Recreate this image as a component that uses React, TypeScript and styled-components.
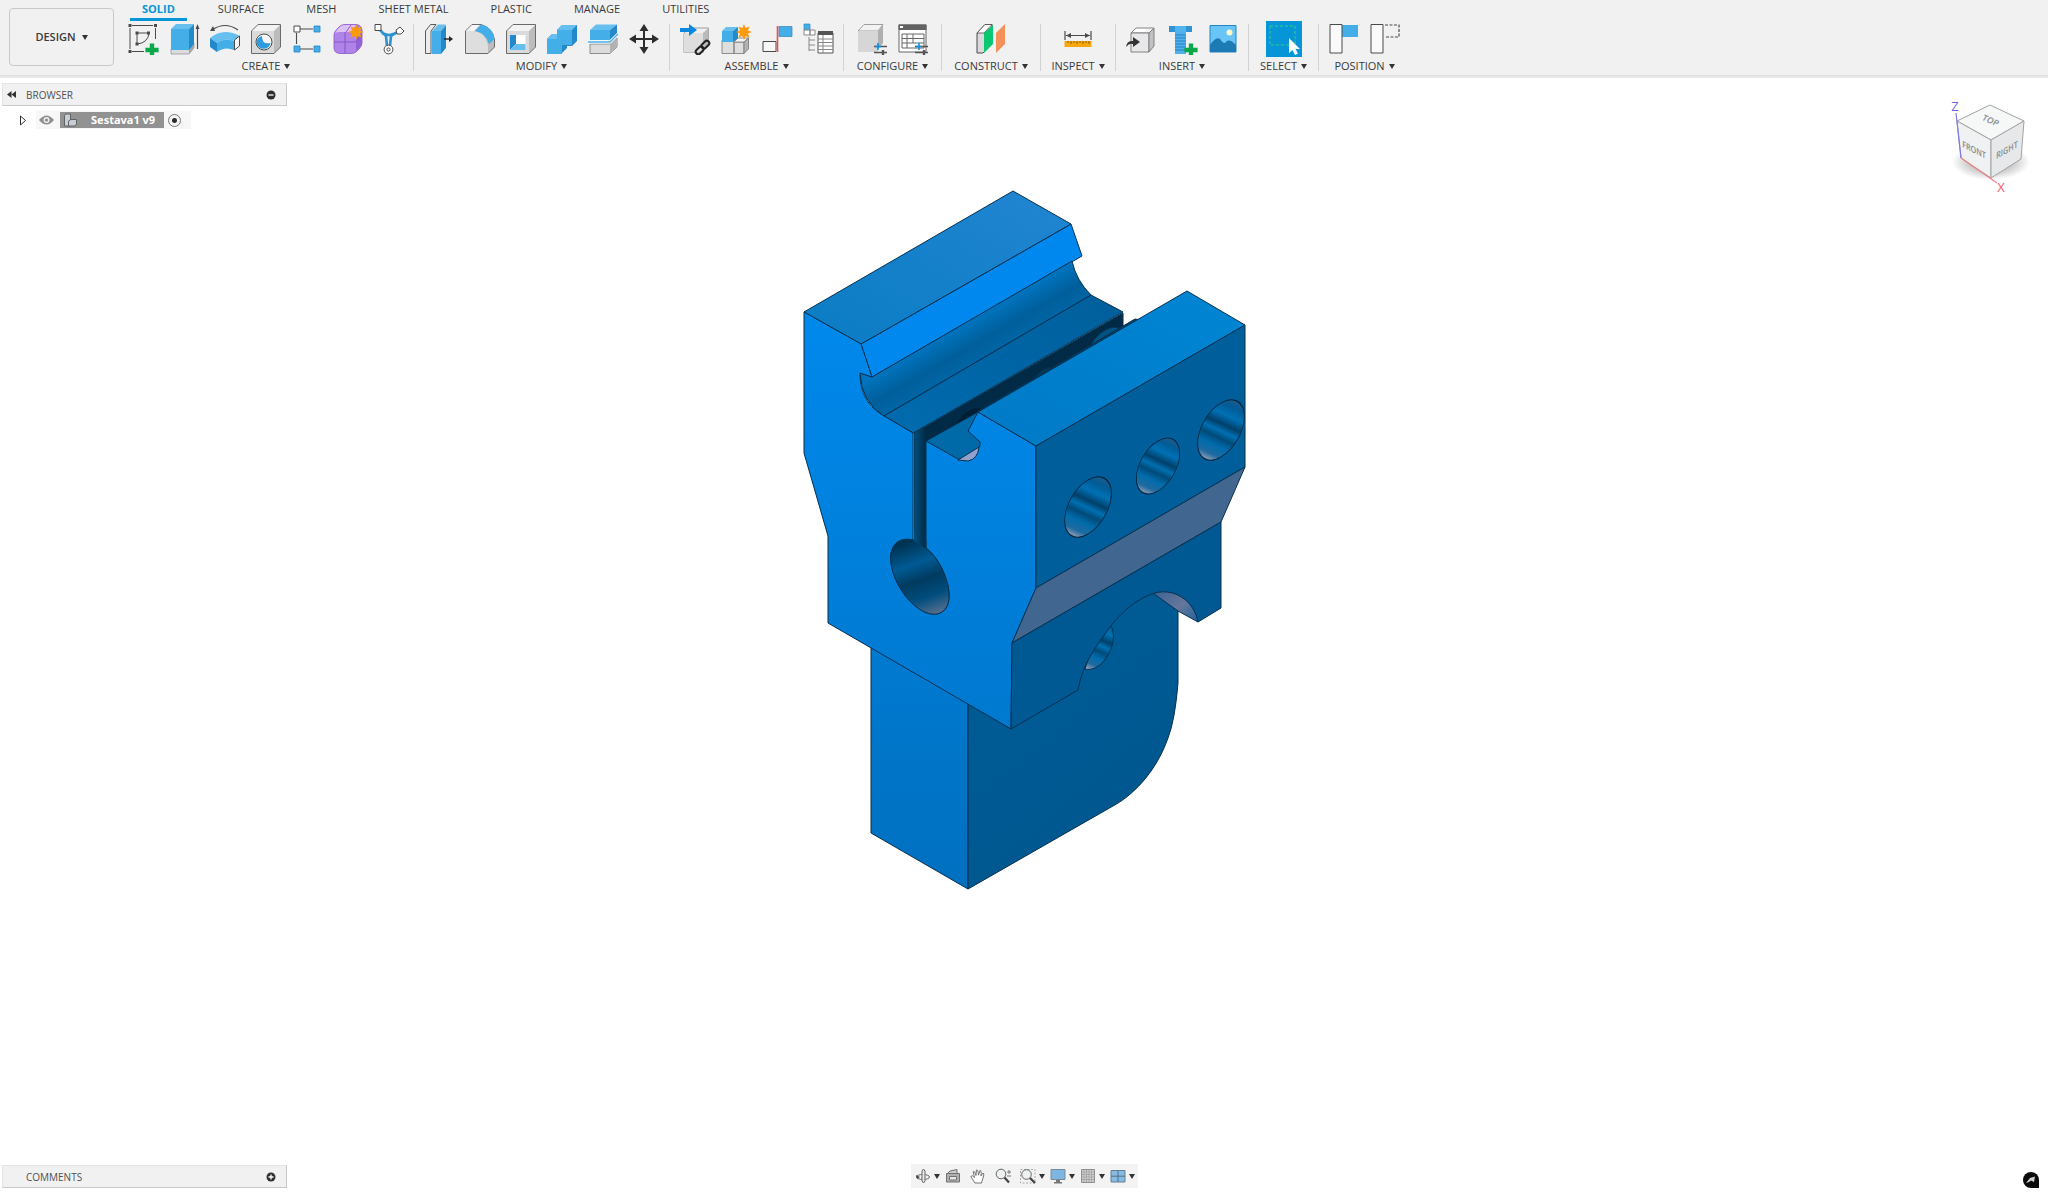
import React from 'react';
import styled, { createGlobalStyle } from 'styled-components';

const color = {
  bar: '#f1f1f1',
  text: '#3a3a3a',
  accent: '#0696d7',
  blue: '#44aee8',
  blueDark: '#2389c8',
  blueLight: '#66bfee',
  ink: '#4a4a4a',
};

const GlobalStyle = createGlobalStyle`
  * { box-sizing: border-box; }
  body { margin: 0; background: #fff; }
  button { font: inherit; color: inherit; background: none; border: 0; padding: 0; margin: 0; cursor: pointer; }
  svg { display: block; }
`;

const Page = styled.div`
  min-height: 100vh;
  display: flex;
  flex-direction: column;
  font-family: 'Open Sans', 'Noto Sans', sans-serif;
  font-size: 11px;
  line-height: 16px;
  color: ${color.text};
`;

/* ---------- toolbar ---------- */

const Header = styled.header`
  display: flex;
  align-items: flex-start;
  gap: 9px;
  height: 78px;
  padding-left: 9px;
  background: ${color.bar};
  border-bottom: 2px solid #e9e9e9;
  box-shadow: inset 0 -1px 0 #dedede;
`;

const WorkspaceButton = styled.button`
  display: flex;
  align-items: center;
  justify-content: center;
  gap: 6px;
  width: 105px;
  height: 58px;
  margin-top: 8px;
  border: 1px solid #c9c9c9;
  border-radius: 4px;
  font-weight: 600;
`;

const Ribbon = styled.div`
  flex: 1;
`;

const Tabs = styled.nav`
  display: flex;
  gap: 20px;
  padding-left: 7px;
`;

const Tab = styled.button<{ $active?: boolean }>`
  height: 21px;
  padding: 0 ${(p) => (p.$active ? 12 : 11)}px;
  line-height: 18px;
  border-bottom: 3px solid ${(p) => (p.$active ? color.accent : 'transparent')};
  color: ${(p) => (p.$active ? color.accent : color.text)};
  font-weight: ${(p) => (p.$active ? 700 : 400)};
`;

const Groups = styled.div`
  display: flex;
`;

const Group = styled.section<{ $width: number }>`
  display: flex;
  flex-direction: column;
  align-items: center;
  gap: 1px;
  flex: none;
  width: ${(p) => p.$width}px;

  &:first-child {
    padding-right: 4px;
  }
`;

const Divider = styled.span`
  width: 1px;
  height: 47px;
  margin-top: 3px;
  background: #d2d2d2;
`;

const Tools = styled.div`
  display: flex;
  gap: 5px;
`;

const Tool = styled.button<{ $active?: boolean }>`
  display: grid;
  place-items: center;
  width: 36px;
  height: 36px;
  background: ${(p) => (p.$active ? color.accent : 'transparent')};
`;

const GroupLabel = styled.button`
  display: flex;
  align-items: center;
  gap: 4px;
  white-space: nowrap;
`;

const Caret = () => (
  <svg width="6" height="5" viewBox="0 0 6 5" aria-hidden>
    <path d="M0 0H6L3 5Z" fill="#333" />
  </svg>
);

/* ---------- tool icons, 32 x 32 grid ---------- */

const Cube = () => (
  <g>
    <path d="M1.500 8L8 1.500H30.500L24 8Z" fill="#f3f3f3" />
    <path d="M24 8L30.500 1.500V24L24 30.500Z" fill="#bcbcbc" />
    <path d="M1.500 8H24V30.500H1.500Z" fill="#dadada" />
    <path d="M1.500 8L8 1.500H30.500V24L24 30.500H1.500Z" fill="none" stroke="#6a6a6a" strokeLinejoin="round" />
  </g>
);

const Spark = ({ x, y }: { x: number; y: number }) => (
  <g transform={`translate(${x} ${y})`}>
    <path
      d="M0 -8L1.600 -3.900L5.600 -5.600L3.900 -1.600L8 0L3.900 1.600L5.600 5.600L1.600 3.900L0 8L-1.600 3.900L-5.600 5.600L-3.900 1.600L-8 0L-3.900 -1.600L-5.600 -5.600L-1.600 -3.900Z"
      fill="#fb9a0a"
    />
  </g>
);

const Plus = ({ x, y }: { x: number; y: number }) => (
  <path
    d={`M${x - 2.2} ${y - 6.6}h4.4v4.4h4.4v4.4h-4.4v4.4h-4.4v-4.4h-4.4v-4.4h4.4Z`}
    fill="#0ba84a"
  />
);

const Sliders = ({ x, y }: { x: number; y: number }) => (
  <g transform={`translate(${x} ${y})`}>
    <path d="M0 3.500H13M0 9.500H13" stroke="#555" strokeWidth="1.600" />
    <path d="M4 0V7M1 3.500H7" stroke="#0c8fe0" strokeWidth="1.600" />
    <path d="M9 7V12.500" stroke="#555" strokeWidth="2.400" />
  </g>
);

const icons: Record<string, React.ReactNode> = {
  sketch: (
    <g fill="none" stroke={color.ink}>
      <path d="M5 2.500H26M3 5V26M5 28.500H17M28.500 5V16" strokeWidth="1" />
      <path d="M10 10V21M10 10H22Q21 20 10 21" strokeWidth="1" />
      <path d="M1.500 1h3v3h-3zM27 1h3v3h-3zM1.500 27h3v3h-3zM8.500 8.500h3v3h-3zM20 8.500h3v3h-3zM8.500 19.500h3v3h-3z" fill={color.ink} stroke="none" />
      <g stroke="none"><Plus x={25} y={27} /></g>
    </g>
  ),
  extrude: (
    <g>
      <path d="M3 26H21L26 20V25L21 31H3Z" fill="#dcdcdc" stroke="#8d8d8d" strokeWidth=".7" />
      <path d="M21 27V31L26 25V20Z" fill="#a5a5a5" />
      <path d="M3 6L8 1H26L21 6Z" fill={color.blueLight} />
      <path d="M3 6H21V27H3Z" fill={color.blue} />
      <path d="M21 6L26 1V21L21 27Z" fill={color.blueDark} />
      <path d="M29.500 5V26" stroke={color.ink} strokeWidth="1.200" />
      <path d="M29.500 1L31.500 6H27.500Z" fill={color.ink} />
    </g>
  ),
  revolve: (
    <g>
      <path d="M3 7Q16 -2 29 7" fill="none" stroke={color.ink} strokeWidth="1.200" />
      <path d="M1 8L4 3L6 8Z" fill={color.ink} />
      <path d="M1 15Q14 4 31 13L25 18Q16 14 8 20Z" fill={color.blueLight} />
      <path d="M1 15L8 20V29L1 24Z" fill={color.blueDark} />
      <path d="M8 20Q16 14 25 18V27Q16 23 8 29Z" fill={color.blue} />
      <path d="M25.500 17L30.500 13V23L25.500 27Z" fill="#f8f8f8" stroke={color.ink} />
    </g>
  ),
  hole: (
    <g>
      <Cube />
      <circle cx="14" cy="19" r="8" fill="#f7f7f7" stroke={color.ink} />
      <path d="M12 13A7 6.500 0 1 0 20.500 20Q12 22 12 13Z" fill="#2d9bdd" />
    </g>
  ),
  pattern: (
    <g>
      <path d="M9 6H22M5.500 10V21M9 26H22" stroke={color.ink} strokeWidth="1.100" />
      <path d="M3 3h6v6H3z" fill="#fff" stroke={color.ink} />
      <path d="M23 3h6v6h-6zM3 23h6v6H3zM23 23h6v6h-6z" fill={color.blue} stroke="#2387c4" strokeWidth=".8" />
    </g>
  ),
  form: (
    <g>
      <path d="M2 12Q2 9 5 6L8 3Q10 1.500 13 1.500H24Q30 2 30 8V20Q30 23 27 26L24 29Q22 30.500 19 30.500H8Q2 30 2 25Z" fill="#b083e8" stroke="#8a58cc" strokeWidth=".8" />
      <path d="M3 10Q5 6 9 3Q11 2 14 2H24L19 9H8Q5 9 3 10Z" fill="#dcc0f8" />
      <path d="M24 12L30 7V20Q29 24 24 28Z" fill="#9460d6" />
      <path d="M2 19H23L30 13M13 9V30M14 9L19 2" fill="none" stroke="#8450c4" strokeWidth=".9" />
      <Spark x={24} y={9} />
    </g>
  ),
  pipe: (
    <g>
      <path d="M6 6L13 13L14 23M26 8L18 13L17 23M9 10Q16 14 23 10" fill="none" stroke="#2f92d2" strokeWidth="2.600" />
      <path d="M2 1.500h6v6H2z" fill="#fff" stroke={color.ink} />
      <path d="M23 7L27 4L31 8L28 11H24Z" fill="#fff" stroke={color.ink} />
      <circle cx="15.500" cy="26.500" r="4.400" fill="#fff" stroke={color.ink} />
      <circle cx="15.500" cy="26.500" r="1.600" fill="none" stroke={color.ink} />
    </g>
  ),
  pressPull: (
    <g>
      <path d="M2.500 8L7.500 1.500H13L8 8V30.500H2.500Z" fill="#ececec" stroke={color.ink} strokeWidth=".9" />
      <path d="M9 8L15 1.500H23L18 8Z" fill={color.blueLight} />
      <path d="M9 8H18V31H9Z" fill={color.blue} />
      <path d="M18 8L23 2V25L18 31Z" fill={color.blueDark} />
      <path d="M21 16H27" stroke="#222" strokeWidth="1.400" />
      <path d="M26 13L30 16L26 19Z" fill="#222" />
    </g>
  ),
  fillet: (
    <g>
      <path d="M1.500 8L8 1.500H17Q29 5 30.500 17V24L24 30.500H1.500Z" fill="#bdbdbd" stroke="#6a6a6a" />
      <path d="M2 8L8 2H16L10 8Z" fill="#f6f6f6" />
      <path d="M2 8H10Q22 10 24 23V30H2Z" fill="#dedede" />
      <path d="M11 8L17 1.500Q29 4 30.500 16L25 21Q22 10 11 8Z" fill={color.blue} />
    </g>
  ),
  shell: (
    <g>
      <Cube />
      <path d="M5 12H20.500V27H5Z" fill="#fff" />
      <path d="M5 12H11V21L5 27Z" fill="#2389c8" />
      <path d="M11 21H20.500V27H5Z" fill={color.blueLight} />
    </g>
  ),
  combine: (
    <g>
      <path d="M1 16L6 11H11V7L16 2H31V18L26 23H21V25L15 31H1Z" fill={color.blueDark} />
      <path d="M1 16H11V7H26V22H16V31H1Z" fill={color.blue} />
      <path d="M1 16L6 11H11V16ZM11 7L16 2H31L26 7Z" fill={color.blueLight} />
    </g>
  ),
  split: (
    <g>
      <path d="M3 21H23L30 15V24L23 30.500H3Z" fill="#dcdcdc" stroke="#777" strokeWidth=".8" />
      <path d="M23 21V30L30 24V15Z" fill="#b2b2b2" />
      <path d="M3 7L9 1.500H30L23 7Z" fill={color.blueLight} />
      <path d="M3 7H23V17H3Z" fill={color.blue} />
      <path d="M23 7L30 1.500V11L23 17Z" fill={color.blueDark} />
      <path d="M1 19H23L31 11" fill="none" stroke="#fff" strokeWidth="3" />
      <path d="M1 19H23L31 11" fill="none" stroke={color.blue} strokeWidth="1.300" />
    </g>
  ),
  move: (
    <g fill="#2d2d2d">
      <path d="M16 5V27M5 16H27" stroke="#2d2d2d" strokeWidth="2" />
      <path d="M16 1L20.500 8H11.500ZM16 31L20.500 24H11.500ZM1 16L8 11.500V20.500ZM31 16L24 11.500V20.500Z" />
    </g>
  ),
  insertLink: (
    <g>
      <path d="M5 10L11 5H29.500V20L24 26V29.500H5Z" fill="#f0f0f0" stroke="#888" strokeWidth=".8" />
      <path d="M5 10H24V29.500H5Z" fill="#dedede" />
      <path d="M24 10L29.500 5V20L24 26Z" fill="#bababa" />
      <path d="M1 5H10V1L18 7L10 13V9H1Z" fill="#0c87e0" />
      <g fill="none" stroke="#222" strokeWidth="2">
        <rect x="-5" y="-2.500" width="9" height="5" rx="2.500" transform="translate(21 27) rotate(-45)" />
        <rect x="-4" y="-2.500" width="9" height="5" rx="2.500" transform="translate(26 22) rotate(-45)" />
      </g>
    </g>
  ),
  newComponent: (
    <g>
      <path d="M2 17H14V30.500H2ZM14 19H24V30.500H14Z" fill="#dedede" stroke="#777" strokeWidth=".8" />
      <path d="M14 19L18 15H28.500L24 19Z" fill="#f3f3f3" stroke="#777" strokeWidth=".8" />
      <path d="M24 19L28.500 15V26L24 30.500Z" fill="#b2b2b2" stroke="#777" strokeWidth=".8" />
      <path d="M2 8L6 4H18L13 8Z" fill={color.blueLight} />
      <path d="M2 8H13V19H2Z" fill={color.blue} />
      <path d="M13 8L18 4V15L13 19Z" fill={color.blueDark} />
      <Spark x={24} y={9} />
    </g>
  ),
  joint: (
    <g>
      <path d="M2 18.500H15V28.500H2Z" fill="#f7f7f7" stroke={color.ink} />
      <path d="M18 3.500H31V13.500H18Z" fill={color.blue} stroke="#2a86bf" strokeWidth=".7" />
      <path d="M16.500 3V29" stroke="#ee4a52" strokeWidth="1.600" />
    </g>
  ),
  bom: (
    <g>
      <path d="M2 1h6v6H2z" fill={color.blue} stroke="#2a86bf" strokeWidth=".7" />
      <path d="M2 7h6v5H2zM8 7h5v5H8z" fill="#fff" stroke="#888" />
      <path d="M7 14V28M7 17H13M7 22H13M7 27H13" stroke="#888" />
      <path d="M16 10H31V30H16Z" fill="#fff" stroke="#555" />
      <path d="M16 8H31V12H16Z" fill="#555" />
      <path d="M16 16H31M16 19.500H31M16 23H31M16 26.500H31M21 12V30" stroke="#888" />
    </g>
  ),
  configure: (
    <g>
      <path d="M2 8L8 1.500H27L22 8Z" fill="#f2f2f2" stroke="#8a8a8a" strokeWidth=".8" />
      <path d="M2 8H22V29H2Z" fill="#d6d6d6" />
      <path d="M22 8L27 2V20L22 26Z" fill="#b0b0b0" />
      <Sliders x={18} y={20} />
    </g>
  ),
  configTable: (
    <g>
      <path d="M2 2H29V29H2Z" fill="#fff" stroke="#666" />
      <path d="M1.500 1.500H29.500V7H1.500Z" fill="#626262" />
      <path d="M3 3h3v2H3z" fill="#fff" />
      <path d="M5 11H27V25H5ZM5 15.500H27M5 20H27M10 11V25M16 11V20" fill="none" stroke="#666" />
      <Sliders x={18} y={20} />
    </g>
  ),
  construct: (
    <g>
      <path d="M2 10L10 1.500H17V21L8 30H2Z" fill="#dadada" stroke={color.ink} />
      <path d="M2 10L10 1.500H17L9 10Z" fill="#fff" stroke={color.ink} strokeWidth=".8" />
      <path d="M9 10L18 2V21L9 30Z" fill="#0ac872" />
      <path d="M21 10L30 1V21L21 30Z" fill="#f59058" />
    </g>
  ),
  measure: (
    <g>
      <path d="M3 8V17M29 8V17M4 12.500H28" stroke={color.ink} strokeWidth="1.200" />
      <path d="M4 12.500L9 10V15ZM28 12.500L23 10V15Z" fill={color.ink} />
      <path d="M2.500 18H29.500V24H2.500Z" fill="#f7a811" />
      <path d="M6 18V20M9 18V21M12 18V20M15 18V21M18 18V20M21 18V21M24 18V20M27 18V21" stroke="#6f4b00" strokeWidth=".8" />
    </g>
  ),
  derive: (
    <g>
      <path d="M6 10L11 5H29L24 10Z" fill="#fff" stroke="#777" strokeWidth=".9" />
      <path d="M6 10H24V29H6Z" fill="#e8e8ea" stroke="#777" strokeWidth=".9" />
      <path d="M24 10L29 5V23L24 29Z" fill="#c2c2c4" stroke="#777" strokeWidth=".9" />
      <path d="M1 24Q2 17 8 18V14L15 19L8 24V21Q4 20 1 24Z" fill="#333" />
    </g>
  ),
  bolt: (
    <g>
      <path d="M3 3H26V9H3Z" fill="#2f93d3" />
      <path d="M9 3H20V9H9Z" fill="#52b4ee" />
      <path d="M9 9H20V31H9Z" fill="#51b0e9" />
      <path d="M9 12H20M9 15H20M9 18H20M9 21H20M9 24H20M9 27H20" stroke="#2383c2" />
      <Plus x={25} y={27} />
    </g>
  ),
  canvas: (
    <g>
      <path d="M3 2.500H29V29H3Z" fill="#69c5f6" stroke="#2286c2" />
      <circle cx="22.500" cy="9.500" r="3" fill="#fdf8c5" />
      <path d="M3 22Q9 13 13 16Q17 22 19 19Q22 15 29 22V29H3Z" fill="#1c7bb4" />
    </g>
  ),
  select: (
    <g>
      <path d="M2 3H27V22H2Z" fill="none" stroke="#2ed18a" strokeDasharray="3 2" />
      <path d="M21 15V30L24.500 27L27 32L30 30.500L27.500 26H32Z" fill="#fff" />
    </g>
  ),
  capture: (
    <g>
      <path d="M14 2H30V14H14Z" fill={color.blue} />
      <path d="M2 1.500H14V30H2Z" fill="#fafafa" stroke={color.ink} />
    </g>
  ),
  revert: (
    <g>
      <path d="M16 2H30V14H16" fill="none" stroke={color.ink} strokeWidth="1.200" strokeDasharray="3 1.500" />
      <path d="M2 1.500H14V30H2Z" fill="#fafafa" stroke={color.ink} />
    </g>
  ),
};

const Icon = ({ name }: { name: string }) => (
  <svg width="32" height="32" viewBox="0 0 32 32" aria-hidden>
    {icons[name]}
  </svg>
);

const tabs = ['SOLID', 'SURFACE', 'MESH', 'SHEET METAL', 'PLASTIC', 'MANAGE', 'UTILITIES'];

const groups = [
  { label: 'CREATE', width: 290, tools: ['sketch', 'extrude', 'revolve', 'hole', 'pattern', 'form', 'pipe'] },
  { label: 'MODIFY', width: 255, tools: ['pressPull', 'fillet', 'shell', 'combine', 'split', 'move'] },
  { label: 'ASSEMBLE', width: 173, tools: ['insertLink', 'newComponent', 'joint', 'bom'] },
  { label: 'CONFIGURE', width: 97, tools: ['configure', 'configTable'] },
  { label: 'CONSTRUCT', width: 98, tools: ['construct'] },
  { label: 'INSPECT', width: 74, tools: ['measure'] },
  { label: 'INSERT', width: 132, tools: ['derive', 'bolt', 'canvas'] },
  { label: 'SELECT', width: 69, tools: ['select'] },
  { label: 'POSITION', width: 91, tools: ['capture', 'revert'] },
];

/* ---------- workspace ---------- */

const Workspace = styled.main`
  flex: 1;
  display: grid;
  grid-template-columns: 1fr auto 1fr;
  grid-template-rows: 1fr auto;
`;

const Side = styled.aside`
  padding: 5px 0 0 2px;
`;

const PanelBar = styled.div`
  display: flex;
  align-items: center;
  width: 285px;
  height: 23px;
  padding: 0 10px 0 4px;
  background: ${color.bar};
  border: 1px solid #e4e4e4;
  border-right-color: #c9c9c9;
  border-bottom-color: #c9c9c9;
`;

const PanelTitle = styled.h2`
  flex: 1;
  margin: 0;
  font-size: 10px;
  font-weight: 400;
  color: #505050;
`;

const PanelLead = styled.button`
  width: 19px;
`;

const TreeRow = styled.div`
  display: flex;
  align-items: center;
  height: 18px;
  margin-top: 5px;
  padding-left: 16px;
`;

const Expander = styled.button`
  width: 18px;
`;

const TreeItem = styled.div`
  display: flex;
  align-items: center;
  height: 18px;
  padding: 0 10px 0 3px;
  background: #f7f7f7;
`;

const EyeButton = styled.button`
  width: 21px;
`;

const Component = styled.label`
  display: flex;
  align-items: center;
  gap: 12px;
  height: 16px;
  padding: 0 9px 0 3px;
  background: #929292;
  color: #fff;
  font-family: 'Noto Sans', 'Open Sans', sans-serif;
  font-weight: 700;
`;

const Radio = styled.input`
  appearance: none;
  width: 13px;
  height: 13px;
  margin: 0 0 0 4px;
  border: 1px solid #777;
  border-radius: 50%;
  background: radial-gradient(circle, #2c2c2c 0 2px, #f4f4f4 3px);
`;

const ModelArea = styled.div`
  padding-top: 110px;
`;

const CubeArea = styled.div`
  display: flex;
  justify-content: flex-end;
  align-items: flex-start;
  padding: 17px 14px 0 0;
`;

const Footer = styled.div<{ $align: string }>`
  display: flex;
  justify-content: ${(p) => p.$align};
  align-items: flex-start;
  height: 28px;
  padding: ${(p) => (p.$align === 'flex-end' ? '8px 9px 0 0' : p.$align === 'flex-start' ? '1px 0 0 2px' : '0')};
`;

const NavBar = styled.div`
  display: flex;
  align-items: center;
  gap: 5px;
  height: 24px;
  padding: 0 3px 0 4px;
  background: #f3f3f3;
`;

const NavButton = styled.button<{ $menu?: boolean }>`
  display: flex;
  align-items: center;
  gap: 3px;
  width: ${(p) => (p.$menu ? 25 : 20)}px;
`;

const Dot = ({ plus }: { plus?: boolean }) => (
  <svg width="10" height="10" viewBox="0 0 10 10" aria-hidden>
    <circle cx="5" cy="5" r="4.500" fill="#2f2f2f" />
    <path d={plus ? 'M2.500 5H7.500M5 2.500V7.500' : 'M2.500 5H7.500'} stroke="#fff" strokeWidth="1.300" />
  </svg>
);

const navIcons = [
  {
    name: 'Orbit', menu: true, art: (
      <g fill="#e8e8e8" stroke="#666">
        <ellipse cx="8" cy="9" rx="6.500" ry="2.500" fill="none" />
        <path d="M7 3L8.500 1L10 3V13L8.500 15L7 13Z" />
        <path d="M1 7L2 11L5 9Z" fill="#444" stroke="none" />
      </g>
    ),
  },
  {
    name: 'Look at', art: (
      <g fill="#b0b0b0" stroke="#707070">
        <path d="M2 6L5 3L12 1.500V5" fill="#ccc" />
        <path d="M1.500 5.500H14.500V14H1.500Z" />
        <path d="M4.500 8.500H11.500V12H4.500Z" fill="#e8e8e8" />
      </g>
    ),
  },
  {
    name: 'Pan', art: (
      <path
        d="M5 15Q3 12 .8 8.500Q2 6.500 4.500 9.500L3.200 3.500Q4.600 2.400 6 7.500L6.400 2Q8 .8 8.500 7.200L10 2.400Q11.600 2.300 11 8L13 5Q14.700 5 13.300 9L11.500 15Z"
        fill="#fff" stroke="#666" strokeWidth=".9"
      />
    ),
  },
  {
    name: 'Zoom', art: (
      <g fill="none" stroke="#666">
        <circle cx="6" cy="6" r="4.800" fill="#eef1f2" />
        <path d="M9.500 9.500L14 14.500" stroke="#444" strokeWidth="2.300" />
        <path d="M12 4H16M14 2V6M12 8H16" stroke="#777" />
      </g>
    ),
  },
  {
    name: 'Fit', menu: true, art: (
      <g fill="none" stroke="#666">
        <path d="M.5 1.500H15V15H.5Z" strokeDasharray="2 1.500" stroke="#aaa" />
        <circle cx="6.500" cy="6.500" r="4.800" fill="#eef1f2" />
        <path d="M10 10L15 15" stroke="#444" strokeWidth="2.300" />
      </g>
    ),
  },
  {
    name: 'Display settings', menu: true, art: (
      <g>
        <path d="M1 1.500H15V11.500H1Z" fill="#7db6e2" stroke="#7c8a96" />
        <path d="M6 12H10V14H12V15.500H4V14H6Z" fill="#777" />
      </g>
    ),
  },
  {
    name: 'Grid and snaps', menu: true, art: (
      <g stroke="#8f8f8f">
        <path d="M1.500 1.500H14.500V14.500H1.500Z" fill="#cdcdcd" />
        <path d="M4 2V14M6.500 2V14M9 2V14M11.500 2V14M2 4H14M2 6.500H14M2 9H14M2 11.500H14" strokeWidth=".5" />
      </g>
    ),
  },
  {
    name: 'Viewports', menu: true, art: (
      <g>
        <path d="M1 2.500H15V14H1Z" fill="#86bbe3" stroke="#647e92" />
        <path d="M8 3V14M1 8.200H15" stroke="#507089" />
      </g>
    ),
  },
];

const ViewCube = () => (
  <svg width="90" height="100" viewBox="0 0 90 100" role="img" aria-label="View cube">
    <defs>
      <radialGradient id="cubeShadow">
        <stop offset=".4" stopColor="#000" stopOpacity=".28" />
        <stop offset="1" stopColor="#000" stopOpacity="0" />
      </radialGradient>
    </defs>
    <ellipse cx="47" cy="67" rx="39" ry="18" fill="url(#cubeShadow)" />
    <g stroke="#a2a2a2" strokeLinejoin="round">
      <path d="M13 26L46 10L80 26L47 45Z" fill="#f6f7f7" />
      <path d="M13 26L47 45V83L17 63Z" fill="#f0f1f2" />
      <path d="M80 26L47 45V83L77 64Z" fill="#e7e8e9" />
    </g>
    <path d="M12 18L17 63" stroke="#7c78e8" strokeWidth="1.200" />
    <path d="M17 63L53 88" stroke="#f08088" strokeWidth="1.200" />
    <g fontFamily="'Open Sans', sans-serif" fontSize="9" fill="#85888b" textAnchor="middle" fontWeight="600">
      <text transform="matrix(.87 .4 -.5 .8 45 28)">TOP</text>
      <text transform="matrix(.8 .4 0 1 30 58)">FRONT</text>
      <text transform="matrix(.8 -.44 0 1 63 58)">RIGHT</text>
    </g>
    <g fontFamily="'Open Sans', sans-serif" fontSize="13" textAnchor="middle">
      <text x="11" y="16" fill="#6a66e6">Z</text>
      <text x="57" y="97" fill="#f0606a">X</text>
    </g>
  </svg>
);

/* Holes on the right-hand faces are circles seen in isometric projection. */
const RightHole = ({ x, y, r }: { x: number; y: number; r: number }) => (
  <g transform={`matrix(.866 -.5 0 1 ${x} ${y})`}>
    <circle r={r} fill="url(#bore)" stroke="#06263f" strokeWidth="1" />
  </g>
);

const BoreStops = () => (
  <>
    <stop offset="0" stopColor="#2b5a86" />
    <stop offset=".14" stopColor="#005c96" />
    <stop offset=".28" stopColor="#0071b4" />
    <stop offset=".42" stopColor="#00406a" />
    <stop offset=".52" stopColor="#0070b2" />
    <stop offset=".62" stopColor="#004a79" />
    <stop offset=".74" stopColor="#006cac" />
    <stop offset=".88" stopColor="#1f6a9f" />
    <stop offset="1" stopColor="#a3a8bd" />
  </>
);

const Model = () => (
  <svg width="449" height="704" viewBox="800 188 449 704" role="img" aria-label="Sestava1 v9 model">
    <defs>
      <linearGradient id="front" x1="0" y1="0" x2="0" y2="1">
        <stop offset="0" stopColor="#0089ec" />
        <stop offset=".5" stopColor="#0081de" />
        <stop offset="1" stopColor="#0078cf" />
      </linearGradient>
      <linearGradient id="topLeft" x1="0" y1="1" x2="1" y2="0">
        <stop offset="0" stopColor="#0a7cc4" />
        <stop offset="1" stopColor="#2285d2" />
      </linearGradient>
      <linearGradient id="topRight" x1="0" y1="1" x2="1" y2="0">
        <stop offset="0" stopColor="#0079c6" />
        <stop offset="1" stopColor="#0086d4" />
      </linearGradient>
      <linearGradient id="groove" gradientUnits="userSpaceOnUse" x1="960" y1="326" x2="983" y2="366">
        <stop offset="0" stopColor="#0074bf" />
        <stop offset=".5" stopColor="#005f9b" />
        <stop offset="1" stopColor="#0068a9" />
      </linearGradient>
      <linearGradient id="flat" x1="0" y1="1" x2="1" y2="0">
        <stop offset="0" stopColor="#006bae" />
        <stop offset="1" stopColor="#005f9c" />
      </linearGradient>
      <linearGradient id="slot" gradientUnits="userSpaceOnUse" x1="914" y1="0" x2="926" y2="0">
        <stop offset="0" stopColor="#00507f" />
        <stop offset="1" stopColor="#002a45" />
      </linearGradient>
      <linearGradient id="bore" x1=".85" y1=".1" x2=".15" y2=".88">
        <BoreStops />
      </linearGradient>
      <linearGradient id="boreStem" gradientUnits="userSpaceOnUse" x1="1111" y1="618" x2="1088" y2="670">
        <BoreStops />
      </linearGradient>
      <linearGradient id="boreFront" gradientUnits="userSpaceOnUse" x1="912" y1="540" x2="938" y2="614">
        <stop offset="0" stopColor="#003252" />
        <stop offset=".3" stopColor="#005a93" />
        <stop offset=".52" stopColor="#003b60" />
        <stop offset=".75" stopColor="#004d7d" />
        <stop offset="1" stopColor="#59708f" />
      </linearGradient>
      <linearGradient id="stemRight" x1="0" y1="0" x2=".6" y2="1">
        <stop offset="0" stopColor="#004877" />
        <stop offset=".35" stopColor="#005b95" />
        <stop offset="1" stopColor="#00568e" />
      </linearGradient>
      <linearGradient id="stemLeft" x1="0" y1="0" x2="0" y2="1">
        <stop offset="0" stopColor="#007ad0" />
        <stop offset="1" stopColor="#0070c0" />
      </linearGradient>
      <linearGradient id="lens" x1="0" y1="0" x2="1" y2="1">
        <stop offset="0" stopColor="#2f5f8e" />
        <stop offset=".6" stopColor="#66779d" />
        <stop offset="1" stopColor="#1d6295" />
      </linearGradient>
      <clipPath id="slotClip">
        <path d="M914 433L1123 313V326L978 413L926 442Z" />
      </clipPath>
    </defs>

    <g stroke="#06304f" strokeWidth="1" strokeLinejoin="round">
      <path d="M871 646L968 702V889L871 833Z" fill="url(#stemLeft)" />
      <path d="M968 702L1060 630L1120 590L1153 590L1178 611V683Q1175 720 1168 738C1155 775 1130 797 1113 806L968 889Z" fill="url(#stemRight)" />
      <path d="M1108 622Q1115 628 1113 642C1110 656 1099 672 1085 669Q1092 640 1108 622Z" fill="url(#boreStem)" />
      <path d="M1150 591L1178 611L1198 622L1192 590L1160 585Z" fill="url(#lens)" />

      <path d="M914 433L1123 313V326L978 413L926 442V560H914Z" fill="url(#slot)" />
      <g clipPath="url(#slotClip)" strokeWidth=".8">
        <g transform="matrix(.866 -.5 0 1 969 434)"><circle r="24" fill="#001f35" /></g>
        <g transform="matrix(.866 -.5 0 1 1043 394)"><circle r="24" fill="#003d60" /></g>
        <g transform="matrix(.866 -.5 0 1 1105 354)"><circle r="24" fill="#005281" /></g>
      </g>
      <path d="M978 411L1135 319L1140 320L980 414Z" fill="#003f68" />
      <path d="M926 441L978 412L985 442L976 454L958 460Z" fill="#0069a8" />

      <path d="M861 344L1071 224L1082 256L872 377Z" fill="#0088ee" />
      <path d="M804 312L1013 191L1071 224L861 344Z" fill="url(#topLeft)" />
      <path d="M872 377L1072 261Q1076 280 1091 295L884 416Q861 402 860 373Z" fill="url(#groove)" />
      <path d="M884 416L1091 295L1123 312L913 433Z" fill="url(#flat)" />

      <path
        d="M804 312L861 344L872 377L860 373C860 395 869 407 884 416L913 433V540C895 536 889 550 891 563C894 588 918 617 937 614C950 611 951 596 947 582C943 568 936 556 926 548V441L958 459Q974 463 980 445V442L968 431L978 412L1036 446V588L1012 643L1011 729L828 623V536L804 453Z"
        fill="url(#front)"
      />
      <path d="M913 540C895 536 889 550 891 563C894 588 918 617 937 614C950 611 951 596 947 582C943 568 936 556 926 548V541Z" fill="url(#boreFront)" />
      <path d="M914 530H925V548L914 541Z" fill="url(#slot)" stroke="none" />

      <path d="M978 412L1187 291L1245 325L1036 446Z" fill="url(#topRight)" />
      <path d="M1036 446L1245 325V467L1036 588Z" fill="#005e9b" />
      <path d="M1036 588L1245 467L1221 522L1012 643Z" fill="#41668f" />
      <path
        d="M1012 643L1221 522V608L1198 622C1195 605 1180 590 1160 592C1145 594 1122 608 1105 634C1091 653 1082 668 1078 690L1011 729Z"
        fill="#005992"
      />
      <path d="M958 460L979 447Q978 459 968 461Z" fill="#8fa0cc" />
    </g>
    <RightHole x={1088} y={507} r={27} />
    <RightHole x={1158} y={466} r={25} />
    <RightHole x={1221} y={430} r={27} />
  </svg>
);

export default function App() {
  return (
    <>
      <GlobalStyle />
      <Page>
        <Header>
          <WorkspaceButton>DESIGN <Caret /></WorkspaceButton>
          <Ribbon>
            <Tabs>
              {tabs.map((t, i) => <Tab key={t} $active={i === 0}>{t}</Tab>)}
            </Tabs>
            <Groups>
              {groups.map((g, i) => (
                <React.Fragment key={g.label}>
                  {i > 0 && <Divider />}
                  <Group $width={g.width}>
                    <Tools>
                      {g.tools.map((t) => (
                        <Tool key={t} $active={t === 'select'} aria-label={t}><Icon name={t} /></Tool>
                      ))}
                    </Tools>
                    <GroupLabel>{g.label}<Caret /></GroupLabel>
                  </Group>
                </React.Fragment>
              ))}
            </Groups>
          </Ribbon>
        </Header>

        <Workspace>
          <Side>
            <PanelBar>
              <PanelLead aria-label="Collapse browser">
                <svg width="9" height="7" viewBox="0 0 9 7"><path d="M4.500 0V7L0 3.500ZM9 0V7L4.500 3.500Z" fill="#333" /></svg>
              </PanelLead>
              <PanelTitle>BROWSER</PanelTitle>
              <button aria-label="Minimise browser"><Dot /></button>
            </PanelBar>
            <TreeRow>
              <Expander aria-label="Expand">
                <svg width="9" height="11" viewBox="0 0 9 11"><path d="M2.500 1V10L7.500 5.500Z" fill="#fff" stroke="#333" /></svg>
              </Expander>
              <TreeItem>
                <EyeButton aria-label="Toggle visibility">
                  <svg width="15" height="10" viewBox="0 0 15 10">
                    <path d="M0 5Q7.500 -4 15 5Q7.500 14 0 5Z" fill="#909090" />
                    <circle cx="7.500" cy="5" r="3" fill="#eee" />
                    <circle cx="7.500" cy="5" r="1.600" fill="#8a8a8a" />
                  </svg>
                </EyeButton>
                <Component htmlFor="root-component">
                  <svg width="16" height="14" viewBox="0 0 16 14" aria-hidden>
                    <g fill="#c9ced4" stroke="#5f6368">
                      <path d="M1.500 2.500L3 1H7.500V13H1.500Z" />
                      <path d="M5.500 8L8 6.500H13.500V11L12 13H5.500Z" />
                    </g>
                  </svg>
                  Sestava1 v9
                </Component>
                <Radio type="radio" id="root-component" name="active-component" defaultChecked />
              </TreeItem>
            </TreeRow>
          </Side>
          <ModelArea><Model /></ModelArea>
          <CubeArea><ViewCube /></CubeArea>

          <Footer $align="flex-start">
            <PanelBar>
              <PanelLead aria-label="Comments" />
              <PanelTitle>COMMENTS</PanelTitle>
              <button aria-label="Expand comments"><Dot plus /></button>
            </PanelBar>
          </Footer>
          <Footer $align="center">
            <NavBar>
              {navIcons.map((n) => (
                <NavButton key={n.name} $menu={n.menu} aria-label={n.name}>
                  <svg width="16" height="16" viewBox="0 0 16 16" aria-hidden>{n.art}</svg>
                  {n.menu && <Caret />}
                </NavButton>
              ))}
            </NavBar>
          </Footer>
          <Footer $align="flex-end">
            <button aria-label="Assistant">
              <svg width="16" height="16" viewBox="0 0 16 16">
                <path d="M8 0A8 8 0 0 1 16 8V16H8A8 8 0 0 1 8 0Z" fill="#0a0a0a" />
                <path d="M3 11L7 6L12 4.500L11 10L8 8.500L6 10Z" fill="#d0d0d0" />
              </svg>
            </button>
          </Footer>
        </Workspace>
      </Page>
    </>
  );
}
